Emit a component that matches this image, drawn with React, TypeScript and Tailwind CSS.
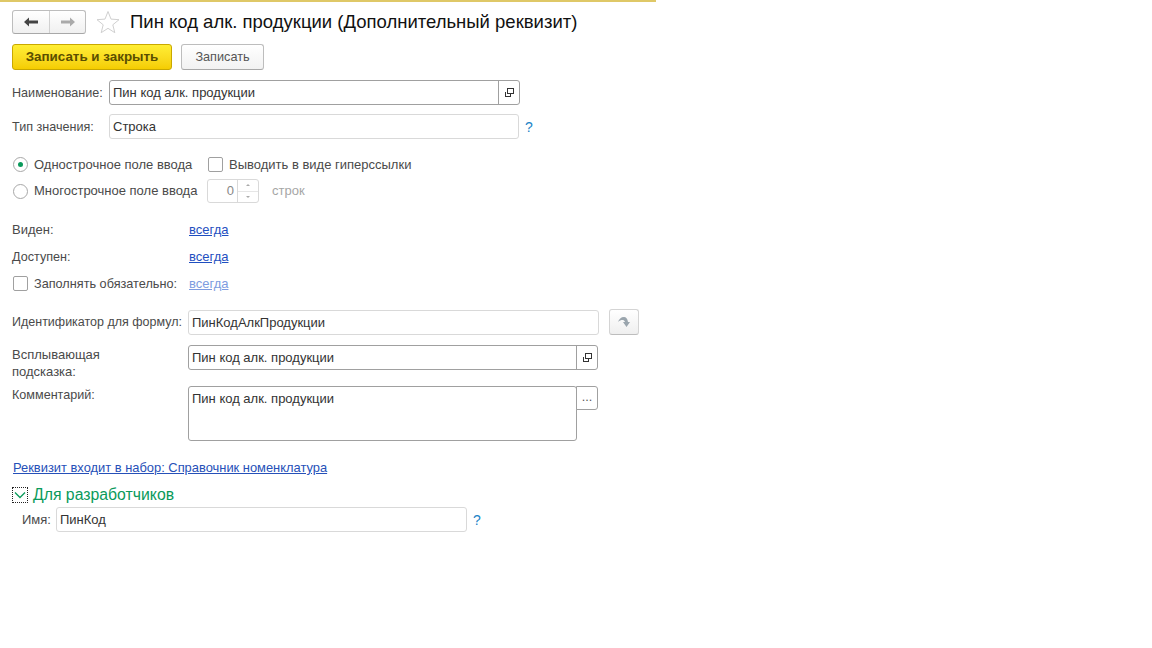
import React from "react";

const Field: React.FC<{ value: string; className: string }> = ({ value, className }) => (
  <div className={`flex items-center rounded-[3px] border border-[#d9d9d9] bg-white text-[13px] text-[#333] ${className}`}>
    {value}
  </div>
);

const OpenIcon = () => (
  <svg width="11" height="11" viewBox="0 0 11 11" fill="none" stroke="#333" strokeWidth="1" shapeRendering="crispEdges">
    <rect x="3.5" y="1.5" width="6" height="5" />
    <path d="M1.5 4.5V9.5H6.5V7" />
  </svg>
);

const FieldWithButton: React.FC<{ value: string; className: string }> = ({ value, className }) => (
  <div className={`flex rounded-[3px] border border-[#a0a0a0] bg-white text-[13px] text-[#333] ${className}`}>
    <div className="flex flex-1 items-center pl-[3px]">{value}</div>
    <div className="flex w-[21px] items-center justify-center border-l border-[#a0a0a0]">
      <OpenIcon />
    </div>
  </div>
);

const Radio: React.FC<{ on?: boolean }> = ({ on }) => (
  <div className="flex h-[15px] w-[15px] shrink-0 items-center justify-center rounded-full border border-[#a8a8a8] bg-white">
    {on && <div className="h-[5px] w-[5px] rounded-full bg-[#0a9a5b]" />}
  </div>
);

const Check = () => <div className="h-[15px] w-[15px] shrink-0 rounded-[2px] border border-[#a0a0a0] bg-white" />;

const Star = () => (
  <svg width="24" height="24" viewBox="0 0 24 24" fill="#fff" stroke="#d0d0d0" strokeWidth="1">
    <path d="M12 1.5l3 7.6 8 .6-6.2 5.1 2 7.9-6.8-4.4-6.8 4.4 2-7.9L1 9.7l8-.6z" />
  </svg>
);

const Arrow: React.FC<{ dir: "left" | "right"; color: string }> = ({ dir, color }) => (
  <svg width="14" height="10" viewBox="0 0 14 10" fill={color}>
    {dir === "left" ? <path d="M0 5l5-4.5V3.500h9v3H5v3z" /> : <path d="M14 5L9 .5V3.500H0v3h9v3z" />}
  </svg>
);

export default function App() {
  return (
    <div className="h-[648px] w-[1152px] bg-white font-['Liberation_Sans',Arial,sans-serif] text-[12.6px] leading-[14px] text-[#4a4a4a]">
      <div className="h-[2px] w-[656px] bg-[#dfc867]" />

      <div className="w-[656px] pl-[12px]">
        {/* title row */}
        <div className="mt-[8px] flex h-[24px] items-center">
          <div className="flex h-[24px] w-[74px] rounded-[3px] border border-[#bdbdbd] border-b-[#a8a8a8] bg-gradient-to-b from-white to-[#f0f0f0]">
            <div className="flex w-[37px] items-center justify-center border-r border-[#d0d0d0]">
              <Arrow dir="left" color="#444" />
            </div>
            <div className="flex flex-1 items-center justify-center">
              <Arrow dir="right" color="#aaa" />
            </div>
          </div>
          <div className="ml-[10px]"><Star /></div>
          <div className="ml-[10px] text-[18.5px] leading-[24px] whitespace-nowrap text-[#111]">
            Пин код алк. продукции (Дополнительный реквизит)
          </div>
        </div>

        {/* command bar */}
        <div className="mt-[10px] flex h-[26px]">
          <div className="flex w-[160px] items-center justify-center rounded-[3px] border border-[#c9a800] bg-gradient-to-b from-[#ffee33] to-[#f5cd00] text-[13.4px] font-bold whitespace-nowrap text-[#5a4e00]">
            Записать и закрыть
          </div>
          <div className="ml-[9px] flex w-[83px] items-center justify-center rounded-[3px] border border-[#bdbdbd] border-b-[#a8a8a8] bg-gradient-to-b from-white to-[#f2f2f2] text-[12.7px] text-[#555]">
            Записать
          </div>
        </div>

        {/* name */}
        <div className="mt-[10px] flex h-[25px] items-center">
          <div className="w-[97px] whitespace-nowrap">Наименование:</div>
          <FieldWithButton value="Пин код алк. продукции" className="h-[25px] w-[411px]" />
        </div>

        {/* type */}
        <div className="mt-[9px] flex h-[25px] items-center">
          <div className="w-[97px] whitespace-nowrap">Тип значения:</div>
          <Field value="Строка" className="h-[25px] w-[410px] pl-[3px]" />
          <div className="ml-[6px] text-[14px] text-[#1c83c6]">?</div>
        </div>

        {/* input kind */}
        <div className="mt-[18px] flex h-[15px] items-center pl-[1px] text-[13px]">
          <Radio on />
          <div className="ml-[6px] w-[174px] whitespace-nowrap">Однострочное поле ввода</div>
          <Check />
          <div className="ml-[6px] whitespace-nowrap">Выводить в виде гиперссылки</div>
        </div>
        <div className="mt-[7px] flex h-[24px] items-center pl-[1px] text-[13px]">
          <Radio />
          <div className="ml-[6px] w-[173px] whitespace-nowrap">Многострочное поле ввода</div>
          <div className="flex h-[24px] w-[52px] rounded-[3px] border border-[#d9d9d9] text-[#888]">
            <div className="flex flex-1 items-center justify-end pr-[3px]">0</div>
            <div className="flex w-[21px] flex-col border-l border-[#d9d9d9] text-[#999]">
              <div className="flex flex-1 items-center justify-center border-b border-[#e6e6e6]">
                <div className="h-0 w-0 border-x-[2px] border-b-[2px] border-x-transparent border-b-[#aaa]" />
              </div>
              <div className="flex flex-1 items-center justify-center">
                <div className="h-0 w-0 border-x-[2px] border-t-[2px] border-x-transparent border-t-[#aaa]" />
              </div>
            </div>
          </div>
          <div className="ml-[13px] text-[#a6a6a6]">строк</div>
        </div>

        {/* visibility */}
        <div className="mt-[20px] flex h-[14px] items-center">
          <div className="w-[177px] text-[13px]">Виден:</div>
          <div className="text-[13px] text-[#1f4fc0] underline">всегда</div>
        </div>
        <div className="mt-[13px] flex h-[14px] items-center">
          <div className="w-[177px]">Доступен:</div>
          <div className="text-[13px] text-[#1f4fc0] underline">всегда</div>
        </div>
        <div className="mt-[12px] flex h-[15px] items-center pl-[1px]">
          <Check />
          <div className="ml-[6px] w-[155px] text-[12.7px] whitespace-nowrap">Заполнять обязательно:</div>
          <div className="text-[13px] text-[#7d9ce0] underline">всегда</div>
        </div>

        {/* identifier */}
        <div className="mt-[18px] flex h-[26px] items-center">
          <div className="w-[176px] text-[12.5px] whitespace-nowrap">Идентификатор для формул:</div>
          <Field value="ПинКодАлкПродукции" className="mt-[1px] h-[25px] w-[411px] pl-[3px]" />
          <div className="ml-[10px] flex h-[26px] w-[30px] items-center justify-center rounded-[3px] border border-[#d4d4d4] border-b-[#bdbdbd] bg-gradient-to-b from-white to-[#efefef]">
            <svg width="12" height="10" viewBox="0 0 12 10" fill="#9aa5ad">
              <path d="M0 5C1 2 3 0 6 0C8 0 9.500 1.500 10 5H12L8.500 10 5 5H7C6.500 3.500 5.500 3 4.500 3C3 3 1.500 3.500 0 5z" />
            </svg>
          </div>
        </div>

        {/* tooltip */}
        <div className="mt-[10px] flex h-[25px]">
          <div className="w-[176px] pt-[1px] text-[13px] leading-[17px]">
            Всплывающая
            <br />
            подсказка:
          </div>
          <FieldWithButton value="Пин код алк. продукции" className="h-[25px] w-[410px]" />
        </div>

        {/* comment */}
        <div className="mt-[16px] flex h-[55px]">
          <div className="w-[176px] pt-[2px]">Комментарий:</div>
          <div className="h-[55px] w-[389px] rounded-[3px] border border-[#a0a0a0] pl-[3px] pt-[5px] text-[13px] text-[#333]">
            Пин код алк. продукции
          </div>
          <div className="-ml-[1px] flex h-[24px] w-[22px] items-center justify-center rounded-r-[3px] border border-[#a0a0a0] bg-white pb-[2px] text-[#555]">
            ...
          </div>
        </div>

        {/* set link */}
        <div className="mt-[20px] pl-[1px] text-[12.9px] whitespace-nowrap text-[#2650b8] underline">
          Реквизит входит в набор: Справочник номенклатура
        </div>

        {/* developers group */}
        <div className="mt-[11px] flex h-[17px] items-center">
          <div className="flex h-[16px] w-[16px] items-center justify-center border border-dotted border-[#222]">
            <svg width="12" height="8" viewBox="0 0 12 8" fill="none" stroke="#0a9a5b" strokeWidth="1.300">
              <path d="M1 1.500l5 5 5-5" />
            </svg>
          </div>
          <div className="ml-[5px] text-[15.800px] leading-[17px] whitespace-nowrap text-[#0a9a5b]">Для разработчиков</div>
        </div>
        <div className="mt-[4px] flex h-[25px] items-center pl-[10px]">
          <div className="w-[34px] text-[13px]">Имя:</div>
          <Field value="ПинКод" className="h-[25px] w-[411px] pl-[3px]" />
          <div className="ml-[6px] text-[14px] text-[#1c83c6]">?</div>
        </div>
      </div>
    </div>
  );
}
